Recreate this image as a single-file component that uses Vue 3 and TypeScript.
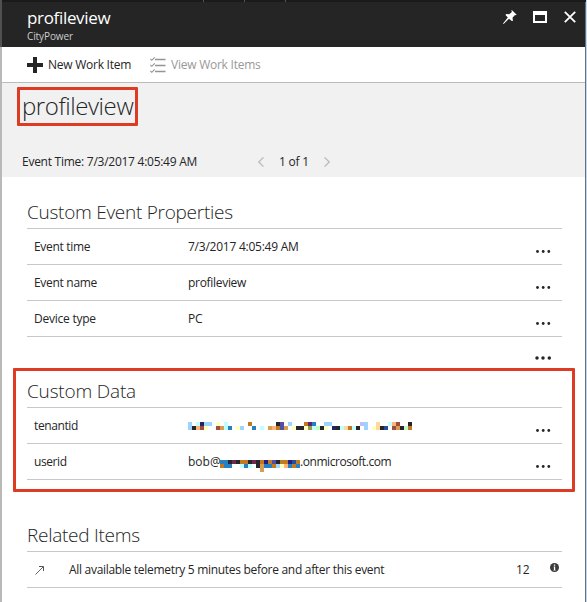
<script setup lang="ts">
interface Row { label: string; value: string; labelClass: string; valueClass: string }

const palette: Record<string, string> = {
  k: '#25252b', b: '#2680c2', l: '#9bd5ff', c: '#c0ffff', y: '#ffffbe', o: '#c17a22',
  t: '#d99c53', r: '#a04c42', s: '#ffb27a', p: '#5350a4', n: '#24245f', g: '#c0ffc0',
  v: '#592477', d: '#23509c', w: '#ffd8a0', m: '#702850', u: '#bdbdff', z: '#241c80',
  e: '#9b9b4e',
}

const events: Row[] = [
  { label: 'Event time', value: '7/3/2017 4:05:49 AM', labelClass: 'tight', valueClass: 'stamp' },
  { label: 'Event name', value: 'profileview', labelClass: 'loose', valueClass: 'tight' },
  { label: 'Device type', value: 'PC', labelClass: 'stamp', valueClass: 'tight' },
]

// Pixelated redactions: one character per 4px cell
const tenant = [
  'l.cnll.y.c.....o......kp.l...ovb..ll.......ul..w..csr..k',
  'lksry..rtcb.yl..b.c.tsopt.ykkyecgky.nkcwock.l.yw.kd.rtkgo'.replace('yw.kd', 'ywkd'),
]

const user = [
  'bbkmkookmkozopkoozdo',
  'obb..cbc.ktbbolysbob',
  '..........t.........',
]

function cells(lines: string[]) {
  return lines.flatMap((line, y) => [...line].map((ch, x) => ({ x: x * 4, y: y * 4, fill: palette[ch] })).filter(c => c.fill))
}
</script>

<template>
  <div class="blade">
    <div class="portal-bar"><i></i><i></i><i></i></div>
    <header>
      <div>
        <div class="title">profileview</div>
        <div class="sub">CityPower</div>
      </div>
      <div class="controls">
        <svg class="pin" width="14" height="14" viewBox="0 0 14 14"><path d="M8.8 0 L13.7 4.8 L12.5 5.2 L12 4.9 L9.5 7.8 L10 10.7 L8.8 11.1 L6 8.7 L.6 13.9 L0 13.5 L4.8 7.6 L2.5 4.9 L3.2 4 L6.2 4.2 L8.9 1.9 L8.4 .8Z" fill="#fff" /></svg>
        <svg class="window" width="14" height="12" viewBox="0 0 14 12"><path fill="#fff" fill-rule="evenodd" d="M0 0H14V12H0ZM2 4V10H12V4Z" /></svg>
        <svg width="12" height="12" viewBox="0 0 12 12"><path d="M.8 .8L11.2 11.2M11.2 .8L.8 11.2" stroke="#fff" stroke-width="1.8" /></svg>
      </div>
    </header>
    <nav>
      <svg width="16" height="16" viewBox="0 0 16 16"><path d="M6 0H10V6H16V10H10V16H6V10H0V6H6Z" fill="#252525" /></svg>
      <span class="new">New Work Item</span>
      <svg class="list" width="16" height="16" viewBox="0 0 16 16" fill="none" stroke="#949494"><path d="M5 2.5H15.5M5 8.5H15.5M5 14.5H15.5" stroke-width="1.4" /><path d="M.3 1.8L1.8 3.3L4.7 .4M.3 7.8L1.8 9.3L4.7 6.4M.3 13.8L1.8 15.3L4.7 12.4" stroke-width="1.1" /></svg>
      <span class="view">View Work Items</span>
    </nav>
    <section class="summary">
      <h1>profileview</h1>
      <div class="pager">
        <span class="etime">Event Time: 7/3/2017 4:05:49 AM</span>
        <svg width="6" height="10" viewBox="0 0 6 10"><path d="M5.5 .4L.8 5L5.5 9.6" fill="none" stroke="#bbb" stroke-width="1.3" /></svg>
        <span class="count">1 of 1</span>
        <svg width="6" height="10" viewBox="0 0 6 10"><path d="M.5 .4L5.2 5L.5 9.6" fill="none" stroke="#bbb" stroke-width="1.3" /></svg>
      </div>
    </section>
    <section class="group props">
      <h2>Custom Event Properties</h2>
      <div v-for="row in events" :key="row.label" class="row">
        <span :class="['label', row.labelClass]">{{ row.label }}</span>
        <span :class="row.valueClass">{{ row.value }}</span>
        <svg class="dots" width="15" height="3" viewBox="0 0 15 3"><circle cx="1.5" cy="1.5" r="1.4" /><circle cx="7.2" cy="1.5" r="1.4" /><circle cx="12.8" cy="1.5" r="1.4" /></svg>
      </div>
      <div class="row more">
        <svg class="dots" width="17" height="4" viewBox="0 0 17 4"><circle cx="2" cy="2" r="1.75" /><circle cx="8" cy="2" r="1.75" /><circle cx="14.3" cy="2" r="1.75" /></svg>
      </div>
    </section>
    <section class="group data">
      <h2 class="h-data">Custom Data</h2>
      <div class="row">
        <span class="label tighter">tenantid</span>
        <svg class="mosaic" width="224" height="8" shape-rendering="crispEdges"><rect v-for="(c, i) in cells(tenant)" :key="i" :x="c.x" :y="c.y" width="4" height="4" :fill="c.fill" /></svg>
        <svg class="dots" width="15" height="3" viewBox="0 0 15 3"><circle cx="1.5" cy="1.5" r="1.4" /><circle cx="7.2" cy="1.5" r="1.4" /><circle cx="12.8" cy="1.5" r="1.4" /></svg>
      </div>
      <div class="row last">
        <span class="label tighter">userid</span>
        <span class="user"><span class="bob">bob@</span><svg class="mosaic u" width="80" height="12" shape-rendering="crispEdges"><rect v-for="(c, i) in cells(user)" :key="i" :x="c.x" :y="c.y" width="4" height="4" :fill="c.fill" /></svg><span class="domain">.onmicrosoft.com</span></span>
        <svg class="dots" width="15" height="3" viewBox="0 0 15 3"><circle cx="1.5" cy="1.5" r="1.4" /><circle cx="7.2" cy="1.5" r="1.4" /><circle cx="12.8" cy="1.5" r="1.4" /></svg>
      </div>
      <div class="highlight"></div>
    </section>
    <section class="group related">
      <h2>Related Items</h2>
      <div class="row last">
        <svg class="arrow" width="10" height="10" viewBox="0 0 10 10" fill="none" stroke="#555"><path d="M.5 9.5L8 2" stroke-width=".9" /><path d="M4 1.5H8.5V6" /></svg>
        <span class="telemetry">All available telemetry 5 minutes before and after this event</span>
        <span class="num">12</span>
        <svg class="info" width="9" height="9" viewBox="0 0 9 9"><circle cx="4.5" cy="4.5" r="4.5" fill="#3b3b3b" /><path d="M3.9 1.6H5.2V2.8H3.9ZM3.6 3.6H5.2V6.8H5.6V7.4H3.5V6.8H3.9V4.2H3.6Z" fill="#fff" /></svg>
      </div>
    </section>
  </div>
</template>

<style>
body { overflow: hidden; }
</style>

<style scoped>
* { box-sizing: border-box; }
.blade { width: 587px; height: 602px; padding-left: 2px; background: linear-gradient(#505050 47px, #b9b9b9 47px) 0 0 / 2px 100% no-repeat #fff; border-right: 1px solid #c9d8e8; box-shadow: inset -1px 0 #64727f; font: 12px/16px "Open Sans", "Noto Sans", sans-serif; color: #252525; overflow: hidden; white-space: nowrap; }
.portal-bar { height: 2px; background: #1a1a1a; display: flex; gap: 40px; padding-left: 201px; }
.portal-bar i { width: 1px; background: #555; }
header { height: 45px; background: #252525; display: flex; justify-content: space-between; padding: 6px 9px 0 25px; margin-right: 1px; color: #fff; }
.title { font-size: 17px; line-height: 20px; letter-spacing: -.33px; }
.sub { font-size: 10px; line-height: 14px; color: #ccc; margin-top: 1px; letter-spacing: -.1px; }
.controls { display: flex; gap: 16px; padding-top: 3px; align-items: flex-start; }
.controls svg { display: block; }
.pin { margin-top: -1px; }
.window { margin-right: 1px; }
nav { height: 36px; border-bottom: 1px solid #bbb; display: flex; align-items: center; padding-left: 25px; margin-right: 1px; }
.new { margin-left: 5px; width: 102px; letter-spacing: -.25px; }
.view { margin-left: 5px; color: #999; letter-spacing: -.24px; }
.summary { height: 94px; margin-right: 1px; background: #f1f1f1; padding: 4px 0 0 15px; }
h1 { margin: 0; width: 121px; height: 39px; border: 3px solid #dd3b24; border-radius: 1px; font-size: 24px; font-weight: 300; line-height: 32px; padding-left: 2px; letter-spacing: -.42px; }
.pager { display: flex; align-items: center; height: 16px; margin: 28px 0 0 5px; }
.etime { width: 236px; letter-spacing: -.26px; }
.count { width: 45px; margin-left: 15px; letter-spacing: -.2px; }
.group { position: relative; margin-left: 25px; width: 535px; }
.props { padding-top: 21px; height: 176px; }
h2 { margin: 0; height: 30px; font-size: 19px; line-height: 28px; font-weight: 300; letter-spacing: -.27px; }
.h-data { letter-spacing: -.18px; }
.row { height: 36px; border-top: 1px solid #c8c8c8; display: flex; align-items: center; padding: 0 11px 0 7px; }
.row.last { height: 37px; border-bottom: 1px solid #c8c8c8; }
.label { width: 154px; }
.tight { letter-spacing: -.3px; }
.tighter { letter-spacing: -.4px; }
.loose { letter-spacing: -.3px; }
.stamp { letter-spacing: -.24px; }
.dots { margin: 10px 0 0 auto; fill: #252525; }
.more { padding-right: 10px; height: 37px; }
.more .dots { margin-top: 6px; }
.data { padding-top: 24px; height: 152px; }
.data .row > .label, .user > span { padding-top: 1px; }
.mosaic { display: block; margin-top: 1px; }
.user { display: flex; align-items: center; height: 16px; }
.bob { width: 32px; }
.mosaic.u { align-self: flex-start; margin-top: 6.5px; }
.domain { letter-spacing: -.44px; }
.highlight { position: absolute; left: -14px; top: 15px; width: 562px; height: 124px; border: 3px solid #dd3b24; border-radius: 1px; }
.related { padding-top: 16px; }
.arrow { margin-left: 1px; }
.telemetry { margin-left: 24px; width: 447px; letter-spacing: -.3px; }
.info { margin: -4px 0 0 auto; }
.related .row { padding-right: 3px; }
</style>
